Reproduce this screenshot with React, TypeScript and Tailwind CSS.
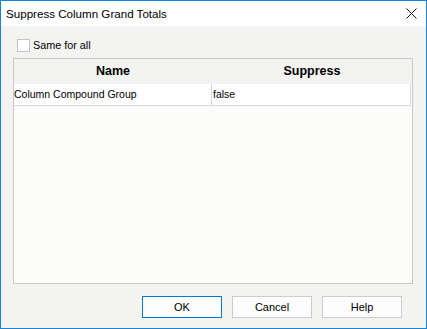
import React from "react";

const rows = [{ name: "Column Compound Group", suppress: "false" }];

const DialogButton: React.FC<{ label: string; primary?: boolean }> = ({
  label,
  primary,
}) => (
  <button
    className={`w-[80px] h-[22px] bg-[#fdfdfd] text-[11px] text-black flex items-center justify-center border ${
      primary ? "border-[#0078d7]" : "border-[#cccccc]"
    }`}
  >
    {label}
  </button>
);

export default function App() {
  return (
    <div
      className="w-[427px] h-[329px] border border-[#1883d7] bg-[#f3f3f1] flex flex-col text-black"
      style={{ fontFamily: '"Liberation Sans", Arial, sans-serif' }}
    >
      {/* title bar */}
      <div className="h-[25px] bg-white flex items-center justify-between pl-[5px] pr-[9px]">
        <span className="text-[11.6px]">Suppress Column Grand Totals</span>
        <svg width="11" height="11" viewBox="0 0 11 11">
          <path d="M0.5 0.5 L10.5 10.5 M10.5 0.5 L0.5 10.5" stroke="#111" strokeWidth="1" />
        </svg>
      </div>

      <div className="flex flex-col flex-1">
        <label className="flex items-center gap-[3px] mt-[13px] ml-[16px] h-[13px]">
          <span className="w-[13px] h-[13px] border border-[#c4c4c4] bg-white" />
          <span className="text-[10.8px]">Same for all</span>
        </label>

        {/* table */}
        <div className="mt-[6px] ml-[12px] w-[400px] h-[226px] border border-[#c8c8c8] bg-[#fcfdfa] flex flex-col">
          <div className="h-[25px] bg-[#f3f3f1] flex text-[12.5px] font-bold items-center">
            <div className="w-[198px] text-center">Name</div>
            <div className="flex-1 text-center">Suppress</div>
          </div>
          {rows.map((r) => (
            <div
              key={r.name}
              className="h-[22px] flex text-[10.5px] bg-white border-b border-r border-[#d9d9d9] mr-px"
            >
              <div className="w-[198px] border-r border-[#d9d9d9] flex items-center">
                {r.name}
              </div>
              <div className="flex-1 flex items-center pl-[1px]">{r.suppress}</div>
            </div>
          ))}
        </div>

        <div className="mt-[12px] flex justify-end gap-[10px] pr-[24px]">
          <DialogButton label="OK" primary />
          <DialogButton label="Cancel" />
          <DialogButton label="Help" />
        </div>
      </div>
    </div>
  );
}
